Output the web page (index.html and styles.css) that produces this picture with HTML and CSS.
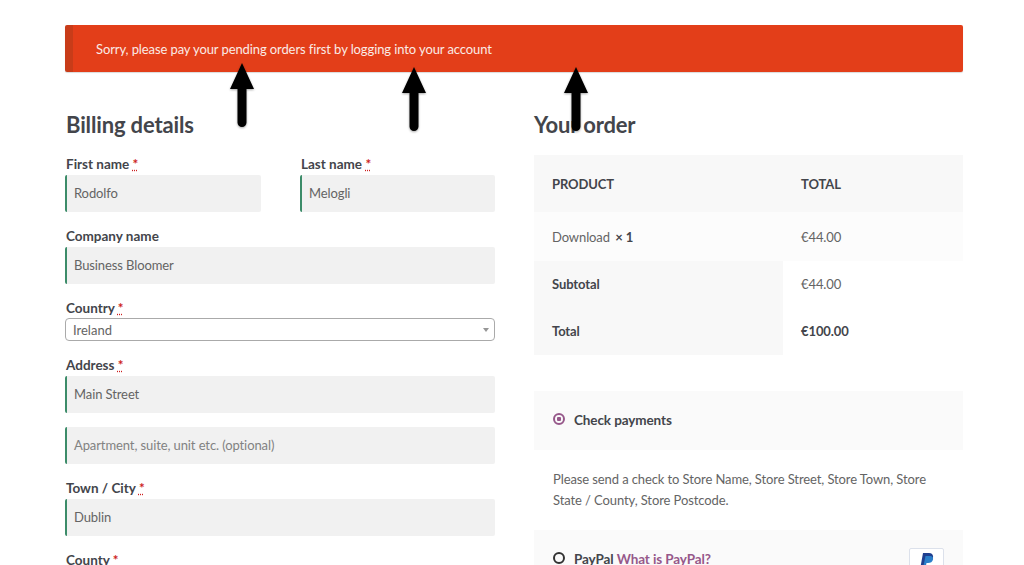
FILE: index.html
```html
<!DOCTYPE html>
<html lang="en">
<head>
    <meta charset="UTF-8">
    <meta name="viewport" content="width=device-width, initial-scale=1.0">
    <title>Checkout</title>
    <link rel="stylesheet" href="styles.css">
</head>
<body>
    <div class="container">
        <!-- Error notice -->
        <div class="notice">Sorry, please pay your pending orders first by logging into your account</div>

        <div class="columns">
            <!-- Billing form -->
            <div class="billing">
                <h3 class="section-title">Billing details</h3>
                <div class="name-row">
                    <div class="field">
                        <label class="field-label">First name <abbr class="required">*</abbr></label>
                        <div class="input">Rodolfo</div>
                    </div>
                    <div class="field">
                        <label class="field-label">Last name <abbr class="required">*</abbr></label>
                        <div class="input">Melogli</div>
                    </div>
                </div>
                <div class="field">
                    <label class="field-label">Company name</label>
                    <div class="input">Business Bloomer</div>
                </div>
                <div class="field">
                    <label class="field-label">Country <abbr class="required">*</abbr></label>
                    <div class="select">
                        <span>Ireland</span>
                        <span class="select-caret"></span>
                    </div>
                </div>
                <div class="field field-address">
                    <label class="field-label">Address <abbr class="required">*</abbr></label>
                    <div class="input">Main Street</div>
                </div>
                <div class="field">
                    <div class="input placeholder">Apartment, suite, unit etc. (optional)</div>
                </div>
                <div class="field">
                    <label class="field-label">Town / City <abbr class="required">*</abbr></label>
                    <div class="input">Dublin</div>
                </div>
                <div class="field">
                    <label class="field-label">County <abbr class="required">*</abbr></label>
                </div>
            </div>

            <!-- Order summary -->
            <div class="order">
                <h3 class="section-title">Your order</h3>
                <table class="order-table">
                    <tr class="head-row">
                        <th>PRODUCT</th>
                        <th>TOTAL</th>
                    </tr>
                    <tr class="item-row">
                        <td>Download <strong class="qty">× 1</strong></td>
                        <td>€44.00</td>
                    </tr>
                    <tr class="sum-row">
                        <th>Subtotal</th>
                        <td>€44.00</td>
                    </tr>
                    <tr class="sum-row">
                        <th>Total</th>
                        <td><strong>€100.00</strong></td>
                    </tr>
                </table>

                <div class="payment payment-check">
                    <span class="radio radio-on"></span>
                    <span class="payment-name">Check payments</span>
                </div>
                <p class="payment-text">Please send a check to Store Name, Store Street, Store Town, Store State / County, Store Postcode.</p>
                <div class="payment payment-paypal">
                    <span class="radio"></span>
                    <span class="payment-name">PayPal <a class="payment-link">What is PayPal?</a></span>
                    <span class="paypal-badge">
                        <svg width="16" height="20" viewBox="0 0 16 20">
                            <path d="M4 1h6c3 0 4.500 2 4 4.500C13.500 8.500 11 10 8.500 10H6.500L5.500 15H1.500z" fill="#1f3f8f"/>
                            <path d="M6.500 4h5c1.500 0 3 1.500 2.500 3.500C13.500 10 11.500 11 9 11H7.500L6.500 16H4z" fill="#2b7fc9"/>
                        </svg>
                    </span>
                </div>
            </div>
        </div>
    </div>

    <!-- Hand-drawn arrows on top of the screenshot -->
    <svg class="arrow arrow-one" width="26" height="64" viewBox="0 0 26 64"><path d="M13 0L25 26H17.500V59.500a4.500 4.500 0 0 1-9 0V26H1z"/></svg>
    <svg class="arrow arrow-two" width="26" height="64" viewBox="0 0 26 64"><path d="M13 0L25 26H17.500V59.500a4.500 4.500 0 0 1-9 0V26H1z"/></svg>
    <svg class="arrow arrow-three" width="26" height="64" viewBox="0 0 26 64"><path d="M13 0L25 26H17.500V59.500a4.500 4.500 0 0 1-9 0V26H1z"/></svg>
</body>
</html>
```

FILE: styles.css
```css
* {
    margin: 0;
    padding: 0;
    box-sizing: border-box;
    font-family: "Lato", "Noto Sans", sans-serif;
}

html, body {
    height: 565px;
    overflow: hidden;
}

body {
    position: relative;
    background-color: white;
    color: rgb(100, 100, 100);
    font-size: 13px;
    letter-spacing: -0.1px;
}

.container {
    width: 898px;
    margin-left: 65px;
    padding-top: 25px;
}

.notice {
    height: 47px;
    line-height: 48px;
    padding-left: 23px;
    background-color: rgb(227, 62, 25);
    border-left: 8px solid rgb(200, 60, 25);
    border-radius: 2px;
    box-shadow: 0 1px 1px rgba(0, 0, 0, 0.15);
    color: rgb(250, 235, 230);
}

.columns {
    display: grid;
    grid-template-columns: 430px 429px;
    column-gap: 39px;
    margin-top: 38px;
}

.section-title {
    height: 28px;
    line-height: 30px;
    margin-bottom: 17px;
    color: rgb(67, 69, 75);
    font-size: 22px;
    font-weight: 700;
    letter-spacing: -0.15px;
}

.billing .section-title,
.billing .field-label {
    padding-left: 1px;
}

.name-row {
    display: grid;
    grid-template-columns: 196px 195px;
    column-gap: 39px;
}

.field {
    margin-bottom: 15px;
}

.field-address {
    margin-bottom: 14px;
}

.field-label {
    display: block;
    height: 18px;
    line-height: 18px;
    margin-bottom: 2px;
    color: rgb(67, 69, 75);
    font-size: 13.5px;
    font-weight: 700;
    letter-spacing: 0;
}

.required {
    color: rgb(205, 30, 30);
    text-decoration: underline dotted;
}

.input {
    height: 37px;
    line-height: 37px;
    padding-left: 7px;
    background-color: rgb(241, 241, 241);
    border-left: 2px solid rgb(60, 140, 105);
    border-radius: 2px;
}

.placeholder {
    color: rgb(130, 130, 130);
}

.select {
    display: flex;
    justify-content: space-between;
    align-items: center;
    height: 23px;
    margin: -1px 0 1px;
    padding: 1px 5px 0 7px;
    background-color: white;
    border: 1px solid rgb(170, 170, 170);
    border-radius: 4px;
    letter-spacing: 0;
}

.select-caret {
    border-left: 3.5px solid transparent;
    border-right: 3.5px solid transparent;
    border-top: 4px solid rgb(150, 150, 150);
}

.order-table {
    width: 429px;
    border-collapse: collapse;
    table-layout: fixed;
}

.order-table th, .order-table td {
    padding-left: 18px;
    text-align: left;
}

.order-table th {
    color: rgb(67, 69, 75);
    font-weight: 700;
}

.order-table td strong {
    color: rgb(67, 69, 75);
}

.order-table tr > :first-child {
    width: 249px;
}

.head-row {
    height: 57px;
    background-color: rgb(248, 248, 248);
}

.item-row {
    height: 49px;
    background-color: rgb(252, 252, 252);
}

.sum-row {
    height: 47px;
}

.sum-row th, .sum-row td {
    padding-bottom: 2px;
}

.sum-row th {
    background-color: rgb(248, 248, 248);
}

.qty {
    margin-left: 2px;
}

.payment {
    display: flex;
    align-items: center;
    padding: 0 0 2px 19px;
    background-color: rgb(250, 250, 250);
}

.payment-check {
    height: 59px;
    margin-top: 36px;
}

.payment-paypal {
    position: relative;
    height: 59px;
}

.payment-name {
    margin-left: 9px;
    color: rgb(67, 69, 75);
    font-size: 13.5px;
    font-weight: 700;
}

.payment-link {
    color: rgb(150, 88, 138);
}

.radio {
    width: 12px;
    height: 12px;
    margin-bottom: 1px;
    border: 2px solid rgb(50, 50, 50);
    border-radius: 50%;
}

.radio-on {
    border-color: rgb(150, 88, 138);
    background: radial-gradient(circle, rgb(150, 88, 138) 2px, transparent 2.5px);
}

.payment-text {
    height: 80px;
    padding: 19px 19px 0;
    line-height: 21px;
}

.paypal-badge {
    position: absolute;
    right: 19px;
    top: 18px;
    display: flex;
    justify-content: center;
    width: 35px;
    height: 30px;
    padding-top: 3px;
    background-color: white;
    border: 1px solid rgb(220, 225, 235);
    border-radius: 2px;
}

.arrow {
    position: absolute;
    filter: drop-shadow(0 1px 1px rgba(0, 0, 0, 0.35));
}

.arrow-one { left: 229px; top: 63px; }
.arrow-two { left: 401px; top: 67px; }
.arrow-three { left: 563px; top: 67px; }
```
